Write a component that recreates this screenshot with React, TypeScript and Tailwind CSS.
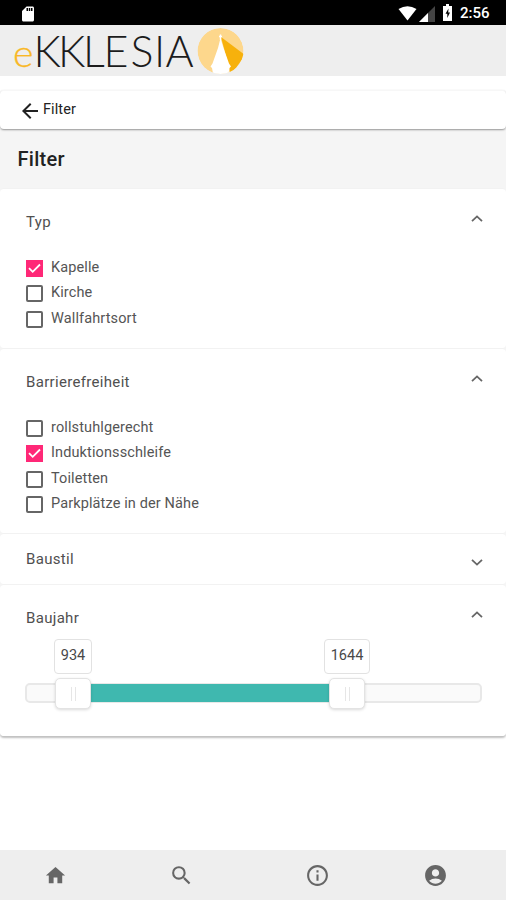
import React from 'react';
import {
  MdAccountCircle,
  MdArrowBack,
  MdHome,
  MdInfoOutline,
  MdSearch,
  MdSdCard,
} from 'react-icons/md';

interface Option {
  label: string;
  checked?: boolean;
}

const typOptions: Option[] = [
  { label: 'Kapelle', checked: true },
  { label: 'Kirche' },
  { label: 'Wallfahrtsort' },
];

const accessOptions: Option[] = [
  { label: 'rollstuhlgerecht' },
  { label: 'Induktionsschleife', checked: true },
  { label: 'Toiletten' },
  { label: 'Parkplätze in der Nähe' },
];

const StatusBar = () => (
  <div className="h-[25px] shrink-0 bg-black text-white flex items-center justify-between pl-[19px] pr-4">
    <MdSdCard className="h-[18px] w-[18px] mt-0.5" />
    <div className="flex items-center">
      <svg className="w-[19px] h-[15px] mt-0.5" viewBox="0 0 19 15" fill="currentColor">
        <path d="M0.5 3 Q9.5 -2.6 18.5 3 L9.5 14.5 Z" />
      </svg>
      <svg className="w-4 h-4 ml-0.5 mt-0.5" viewBox="0 0 16 16">
        <path d="M0 16 L16 0 V16 Z" fill="#444" />
        <path d="M0 16 L9 7 V16 Z" fill="#fff" />
      </svg>
      <svg className="w-[9px] h-[17px] ml-[8px]" viewBox="0 0 9 17">
        <path d="M3 0 H6 V2 H9 V17 H0 V2 H3 Z" fill="#fff" />
        <path d="M5.5 4.5 L2.5 9.7 H4.3 V14 L7 8.6 H5.2 Z" fill="#000" />
      </svg>
      <span className="ml-[8px] mt-0.5 w-[30px] text-[15px] leading-none font-medium">2:56</span>
    </div>
  </div>
);

const Logo = () => (
  <svg className="block w-[250px] h-[51px]" viewBox="0 0 250 51" role="img" aria-label="eKKLESIA">
    <text x="13" y="41.5" fontFamily="Lato" fontWeight="300" fontSize="37" fill="#f9b826" stroke="#f9b826" strokeWidth="0.3" textLength="20.5" lengthAdjust="spacingAndGlyphs">e</text>
    <text x="33.5 58 83 103.5 130.5 154 165.5" y="41.5" fontFamily="Lato" fontWeight="300" fontSize="43" fill="#1c1c1c">KKLESIA</text>
    <clipPath id="disc">
      <circle cx="220.5" cy="26" r="23" />
    </clipPath>
    <g clipPath="url(#disc)">
      <circle cx="220.5" cy="26" r="23" fill="#fdd78c" />
      <path d="M221 12 L245 30 L231 50 Z" fill="#f7b10c" />
      <path d="M220.5 13 L223.5 23 L229 38.5 L231 41.5 L229.5 43 L228 51 H213.5 L212 43 L210.5 41.5 L212.5 38.5 L218 23 Z" fill="#fff" />
      <path d="M220.5 9.5 V15 M219 11.5 H222" stroke="#fff" strokeWidth="1.4" />
    </g>
  </svg>
);

const Checkbox: React.FC<Option> = ({ label, checked = false }) => (
  <label className="flex items-center h-[25.3px]">
    {checked ? (
      <span className="size-[17px] bg-[#ff2877] flex items-center justify-center">
        <svg className="w-[13px] h-[13px]" viewBox="0 0 13 13" fill="none" stroke="#fff" strokeWidth="1.8">
          <path d="M1 6.2 L4.7 9.8 L12 2.5" />
        </svg>
      </span>
    ) : (
      <span className="size-[17px] rounded-[2px] border-2 border-[#666]" />
    )}
    <span className="ml-2 -mt-px text-[14.5px] leading-5 tracking-[0.12px] text-[#555]">{label}</span>
  </label>
);

const Chevron = ({ down = false }: { down?: boolean }) => (
  <svg className="w-3 h-[7px]" viewBox="0 0 12 7" fill="none" stroke="#666" strokeWidth="1.8">
    <path d={down ? 'M1 0.8 L6 5.6 L11 0.8' : 'M1 6.2 L6 1.4 L11 6.2'} />
  </svg>
);

interface PanelProps {
  title: string;
  className: string;
  closed?: boolean;
  children?: React.ReactNode;
}

const Panel: React.FC<PanelProps> = ({ title, className, closed, children }) => (
  <section className={`bg-white rounded-[4px] border-t border-[#f2f2f2] pl-[26px] pr-[23px] ${className}`}>
    <div className={closed ? 'flex justify-between items-center h-[50px]' : 'flex justify-between items-center h-[66px]'}>
      <h2 className="text-[15px] leading-5 tracking-[0.32px] text-[#505050]">{title}</h2>
      <span className={closed ? 'mt-[7px]' : '-mt-[7px]'}>
        <Chevron down={closed} />
      </span>
    </div>
    {children}
  </section>
);

const Handle = ({ className }: { className: string }) => (
  <span className={`absolute -top-[7px] w-9 h-[31px] rounded-[5px] border border-[#e3e3e3] bg-white shadow-[0_1px_3px_rgba(0,0,0,0.15)] flex items-center justify-center gap-[3px] ${className}`}>
    <i className="w-px h-3.5 bg-[#e6e6e6]" />
    <i className="w-px h-3.5 bg-[#e6e6e6]" />
  </span>
);

const Tooltip = ({ value, className }: { value: number; className: string }) => (
  <span className={`absolute -top-[46px] h-[35px] rounded-[4px] border border-[#e2e2e2] bg-white flex items-center justify-center pb-0.5 text-[14.5px] text-[#484848] ${className}`}>
    {value}
  </span>
);

const App: React.FC = () => {
  return (
    <div className="h-[900px] w-full bg-white flex flex-col overflow-hidden font-['Roboto',sans-serif]">
      <StatusBar />
      <header className="h-[51px] shrink-0 bg-[#eeeeee]">
        <Logo />
      </header>

      <div className="mt-[14px] h-[39px] shrink-0 bg-white rounded-[4px] border-t border-[#f7f7f7] shadow-[0_1px_2px_rgba(0,0,0,0.4)] flex items-center pl-[18px] relative">
        <MdArrowBack className="size-6 mt-px text-[#222]" />
        <span className="ml-px text-[14.5px] leading-5 tracking-[0.1px] text-[#222]">Filter</span>
      </div>

      <main className="shrink-0 bg-[#f5f5f5] rounded-b-[4px] shadow-[0_2px_2px_rgba(0,0,0,0.25)]">
        <h1 className="h-[59px] flex items-center pl-[17.5px] text-[20px] font-medium tracking-[0.3px] text-[#222]">
          Filter
        </h1>
        <Panel title="Typ" className="h-[160px]">
          <div className="pt-px">
            {typOptions.map((option) => (
              <Checkbox key={option.label} {...option} />
            ))}
          </div>
        </Panel>
        <Panel title="Barrierefreiheit" className="h-[185px]">
          <div className="pt-px">
            {accessOptions.map((option) => (
              <Checkbox key={option.label} {...option} />
            ))}
          </div>
        </Panel>
        <Panel title="Baustil" className="h-[51px]" closed />
        <Panel title="Baujahr" className="h-[152px]">
          <div className="relative mt-8 -ml-px h-5 w-[457px] rounded-[5px] border-2 border-[#e8e8e8] bg-[#fafafa]">
            <div className="ml-[46px] -mt-px h-[18px] w-[274px] bg-[#3fb8af]" />
            <Tooltip value={934} className="left-[27px] w-[38px]" />
            <Tooltip value={1644} className="left-[297px] w-[46px]" />
            <Handle className="left-[28px]" />
            <Handle className="left-[302px]" />
          </div>
        </Panel>
      </main>

      <nav className="mt-auto h-[50px] shrink-0 bg-[#eeeeee] grid grid-cols-[111px_141px_130px_106px] items-center text-[#666]">
        <MdHome className="size-[23px] justify-self-center" />
        <MdSearch className="size-[25px] justify-self-center" />
        <MdInfoOutline className="size-[25px] justify-self-center" />
        <MdAccountCircle className="size-[25px] justify-self-center" />
      </nav>
    </div>
  );
};

export default App;
